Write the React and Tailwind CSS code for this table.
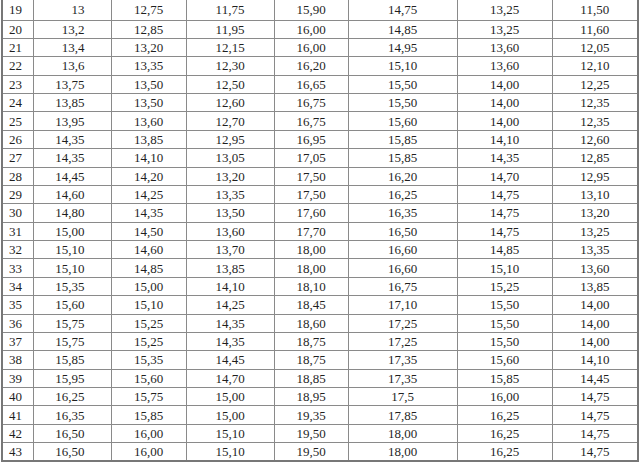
import React from 'react';

const rows = [
  ['19', '13', '12,75', '11,75', '15,90', '14,75', '13,25', '11,50'],
  ['20', '13,2', '12,85', '11,95', '16,00', '14,85', '13,25', '11,60'],
  ['21', '13,4', '13,20', '12,15', '16,00', '14,95', '13,60', '12,05'],
  ['22', '13,6', '13,35', '12,30', '16,20', '15,10', '13,60', '12,10'],
  ['23', '13,75', '13,50', '12,50', '16,65', '15,50', '14,00', '12,25'],
  ['24', '13,85', '13,50', '12,60', '16,75', '15,50', '14,00', '12,35'],
  ['25', '13,95', '13,60', '12,70', '16,75', '15,60', '14,00', '12,35'],
  ['26', '14,35', '13,85', '12,95', '16,95', '15,85', '14,10', '12,60'],
  ['27', '14,35', '14,10', '13,05', '17,05', '15,85', '14,35', '12,85'],
  ['28', '14,45', '14,20', '13,20', '17,50', '16,20', '14,70', '12,95'],
  ['29', '14,60', '14,25', '13,35', '17,50', '16,25', '14,75', '13,10'],
  ['30', '14,80', '14,35', '13,50', '17,60', '16,35', '14,75', '13,20'],
  ['31', '15,00', '14,50', '13,60', '17,70', '16,50', '14,75', '13,25'],
  ['32', '15,10', '14,60', '13,70', '18,00', '16,60', '14,85', '13,35'],
  ['33', '15,10', '14,85', '13,85', '18,00', '16,60', '15,10', '13,60'],
  ['34', '15,35', '15,00', '14,10', '18,10', '16,75', '15,25', '13,85'],
  ['35', '15,60', '15,10', '14,25', '18,45', '17,10', '15,50', '14,00'],
  ['36', '15,75', '15,25', '14,35', '18,60', '17,25', '15,50', '14,00'],
  ['37', '15,75', '15,25', '14,35', '18,75', '17,25', '15,50', '14,00'],
  ['38', '15,85', '15,35', '14,45', '18,75', '17,35', '15,60', '14,10'],
  ['39', '15,95', '15,60', '14,70', '18,85', '17,35', '15,85', '14,45'],
  ['40', '16,25', '15,75', '15,00', '18,95', '17,5', '16,00', '14,75'],
  ['41', '16,35', '15,85', '15,00', '19,35', '17,85', '16,25', '14,75'],
  ['42', '16,50', '16,00', '15,10', '19,50', '18,00', '16,25', '14,75'],
  ['43', '16,50', '16,00', '15,10', '19,50', '18,00', '16,25', '14,75'],
];

const App = () => {
  return (
    <div className="w-[640px] h-[464px] bg-white overflow-hidden pl-[1px] [font-family:'Liberation_Serif',serif] text-[13px] text-[#1f1f1f]">
      <table className="table-fixed border-collapse w-[636px] border-2 border-t-0 border-[#777]">
        <colgroup>
          <col className="w-[31px]" />
          <col className="w-[78px]" />
          <col className="w-[75px]" />
          <col className="w-[88px]" />
          <col className="w-[74px]" />
          <col className="w-[109px]" />
          <col className="w-[95px]" />
          <col className="w-[86px]" />
        </colgroup>
        <tbody>
          {rows.map((r, i) => (
            <tr key={r[0]} className={i === 0 ? 'h-[20px]' : 'h-[18.375px]'}>
              {r.map((v, j) => (
                <td
                  key={j}
                  className={`p-0 leading-none border border-[#8a8a8a] ${i === 0 ? 'border-t-0' : ''} ${
                    j === 0 ? 'text-left pl-[6px]' : j === 1 ? 'text-right pr-[26px]' : 'text-center'
                  }`}
                >
                  {v}
                </td>
              ))}
            </tr>
          ))}
        </tbody>
      </table>
    </div>
  );
};

export default App;
